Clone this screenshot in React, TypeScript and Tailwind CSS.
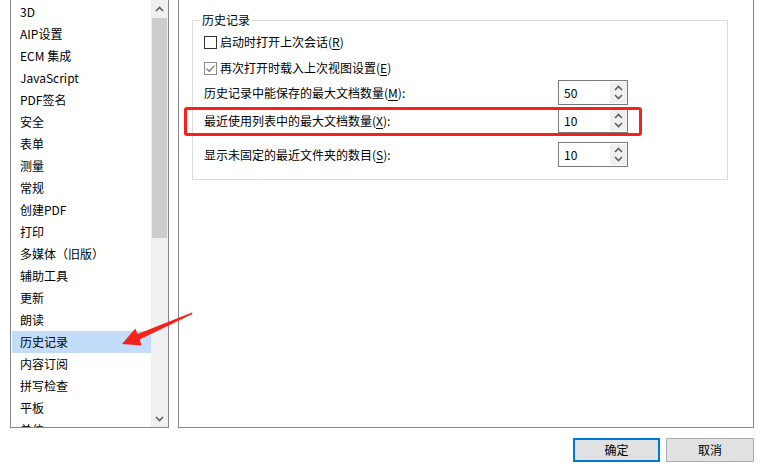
import * as React from 'react';

const ITEMS = [
	'3D',
	'AIP设置',
	'ECM 集成',
	'JavaScript',
	'PDF签名',
	'安全',
	'表单',
	'测量',
	'常规',
	'创建PDF',
	'打印',
	'多媒体（旧版）',
	'辅助工具',
	'更新',
	'朗读',
	'历史记录',
	'内容订阅',
	'拼写检查',
	'平板',
	'单位',
];

function Chevron({ up }: { up?: boolean }) {
	return (
		<svg width="9" height="6" viewBox="0 0 9 6" className="block">
			<path
				d={up ? 'M1 5 L4.5 1.5 L8 5' : 'M1 1 L4.5 4.5 L8 1'}
				fill="none"
				stroke="#606060"
				strokeWidth="1.6"
			/>
		</svg>
	);
}

function Key({ k }: { k: string }) {
	return (
		<>
			(<span className="underline underline-offset-2">{k}</span>)
		</>
	);
}

function Spin({ value }: { value: string }) {
	return (
		<div className="flex h-[25px] w-[70px] border border-[#7a7a7a] bg-white">
			<div className="flex flex-1 items-center pl-[5px]">{value}</div>
			<div className="my-px flex w-[17px] flex-col items-center justify-center gap-[3px] bg-[#f0f0f0]">
				<Chevron up />
				<Chevron />
			</div>
		</div>
	);
}

export default function App() {
	return (
		<div className="relative h-[476px] w-[775px] overflow-hidden bg-white text-[12px] leading-4 text-black font-['Noto_Sans_CJK_SC',sans-serif]">
			<div className="flex h-[428px]">
				{/* category list */}
				<div className="ml-[10px] flex h-full w-[159px] border-x border-b border-[#828790]">
					<ul className="flex-1 overflow-hidden pl-px pt-px">
						{ITEMS.map((it) => (
							<li
								key={it}
								className={
									'flex h-[22px] items-center pl-2 ' +
									(it === '历史记录' ? 'bg-[#c2dcfa]' : '')
								}
							>
								{it}
							</li>
						))}
					</ul>
					<div className="flex w-[17px] flex-col bg-[#f0f0f0]">
						<div className="flex h-[18px] items-center justify-center">
							<Chevron up />
						</div>
						<div className="mx-px h-[220px] bg-[#cdcdcd]" />
						<div className="flex-1" />
						<div className="flex h-[17px] items-center justify-center">
							<Chevron />
						</div>
					</div>
				</div>

				{/* settings panel */}
				<div className="ml-[9px] h-full w-[576px] border-x border-b border-[#828790] pl-[13px]">
					<fieldset className="mt-[12px] w-[536px] border border-[#dcdcdc] pb-[12px] pl-[11px]">
						<legend className="ml-[-4px] px-[2px] leading-4">历史记录</legend>
						<label className="mt-[3px] flex h-[22px] items-center">
							<span className="mr-[2px] h-[13px] w-[13px] border border-[#333]" />
							<span className="ml-px">启动时打开上次会话<Key k="R" /></span>
						</label>
						<label className="mt-[4px] flex h-[22px] items-center">
							<span className="mr-[2px] flex h-[13px] w-[13px] items-center justify-center border border-[#8a8a8a]">
								<svg width="11" height="11" viewBox="0 0 11 11">
									<path d="M1.5 5.5 L4.2 8.2 L9.5 2.6" fill="none" stroke="#7a7a7a" strokeWidth="1.3" />
								</svg>
							</span>
							<span className="ml-px">再次打开时载入上次视图设置<Key k="E" /></span>
						</label>
						<div className="mt-px flex h-[25px] items-center">
							<span className="w-[354px]">历史记录中能保存的最大文档数量<Key k="M" />:</span>
							<Spin value="50" />
						</div>
						<div className="mt-[3px] flex h-[25px] items-center">
							<span className="w-[354px]">最近使用列表中的最大文档数量<Key k="X" />:</span>
							<Spin value="10" />
						</div>
						<div className="mt-[9px] flex h-[25px] items-center">
							<span className="w-[354px]">显示未固定的最近文件夹的数目<Key k="S" />:</span>
							<Spin value="10" />
						</div>
					</fieldset>
				</div>
			</div>

			<div className="mt-[10px] flex justify-end gap-[6px] pr-[21px]">
				<button className="flex h-[24px] w-[87px] items-center justify-center border-2 border-[#0078d7] bg-[#e1e1e1]">
					确定
				</button>
				<button className="flex h-[24px] w-[88px] items-center justify-center border border-[#adadad] bg-[#e1e1e1]">
					取消
				</button>
			</div>

			{/* annotation: red box */}
			<div className="absolute left-[184px] top-[107px] h-[29px] w-[458px] rounded-[3px] border-[3px] border-[#f5221b]" />

			{/* annotation: arrow */}
			<svg className="absolute left-0 top-0" width="775" height="476" viewBox="0 0 775 476">
				<polygon
					points="192,312.5 192.5,314 139.5,339.5 141.7,345.5 122,344 135.3,328.5 137.5,334"
					fill="#f5221b"
				/>
			</svg>
		</div>
	);
}
